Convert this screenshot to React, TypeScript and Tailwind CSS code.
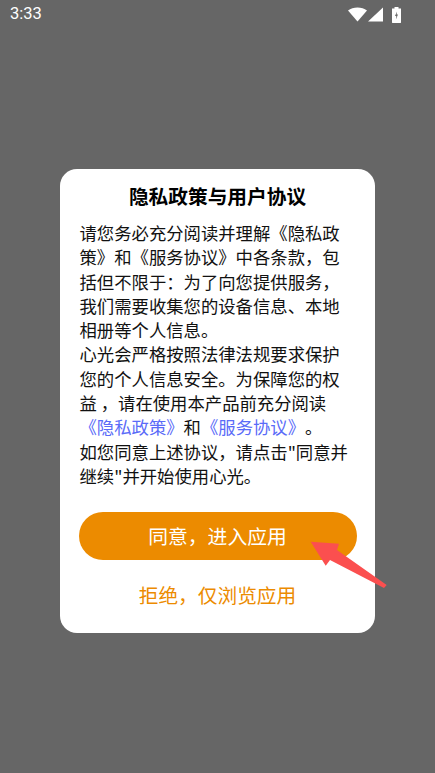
const CJK = "font-['Noto_Sans_CJK_SC','Noto_Sans_CJK_JP',sans-serif]";

function StatusIcons() {
  return (
    <div className="flex items-center gap-[9px]">
      <svg width="35" height="15" viewBox="0 0 35 15" className="block">
        <path d="M0 3.6 C5 -0.6 14 -0.6 19 3.6 L9.5 14.6 Z" fill="#fff" />
        <path d="M35 0.4 L35 14.6 L20 14.6 Z" fill="#fff" />
      </svg>
      <svg width="9" height="16" viewBox="0 0 9 16" className="block">
        <path d="M2.5 0 H6.5 V1.4 H9 V15.6 Q9 16 8.5 16 H0.5 Q0 16 0 15.6 V1.4 H2.5 Z" fill="#fff" />
        <path d="M5 4.6 L3 9 H4.3 L3.9 12.4 L6 7.6 H4.7 Z" fill="#666" />
      </svg>
    </div>
  );
}

export default function App() {
  return (
    <main className={`relative flex h-[773px] w-[435px] flex-col items-center overflow-hidden bg-[#666666] ${CJK}`}>
      <div className="flex h-[29px] w-full items-center justify-between pl-[10px] pr-[34px]">
        <span className="font-['Roboto',sans-serif] text-[16.5px] text-white">3:33</span>
        <StatusIcons />
      </div>

      <section className="mt-[140px] flex h-[464px] w-[315px] flex-col rounded-[17px] bg-white px-[19.5px]">
        <h1 className="mt-[13px] text-center text-[19.7px] font-bold leading-[28px] text-black">
          隐私政策与用户协议
        </h1>
        <p className="mt-[11px] whitespace-nowrap text-[17.35px] leading-[24.3px] text-[#111] [text-spacing-trim:space-all]">
          请您务必充分阅读并理解《隐私政
          <br />
          策》和《服务协议》中各条款，包
          <br />
          括但不限于：为了向您提供服务，
          <br />
          我们需要收集您的设备信息、本地
          <br />
          相册等个人信息。
          <br />
          心光会严格按照法律法规要求保护
          <br />
          您的个人信息安全。为保障您的权
          <br />
          益 ，请在使用本产品前充分阅读
          <br />
          <span className="text-[#5a6bf8]">《隐私政策》</span>和
          <span className="text-[#5a6bf8]">《服务协议》</span>。
          <br />
          如您同意上述协议，请点击"同意并
          <br />
          继续"并开始使用心光。
        </p>
        <button
          type="button"
          className="-mx-[1px] mt-[24px] flex h-[48px] items-center justify-center rounded-[24px] bg-[#ec8b00] text-[19.8px] text-white"
        >
          同意，进入应用
        </button>
        <button type="button" className="mt-[18px] h-[34px] text-center text-[19.7px] text-[#ec8b00]">
          拒绝，仅浏览应用
        </button>
      </section>

      <svg width="435" height="773" viewBox="0 0 435 773" className="pointer-events-none absolute left-0 top-0">
        <path
          d="M310.7 541.7 L339 543.7 L337 550 L386.7 585 L384 588 L330 560 L325.7 565.7 Z"
          fill="#fb4f4f"
        />
      </svg>
    </main>
  );
}
